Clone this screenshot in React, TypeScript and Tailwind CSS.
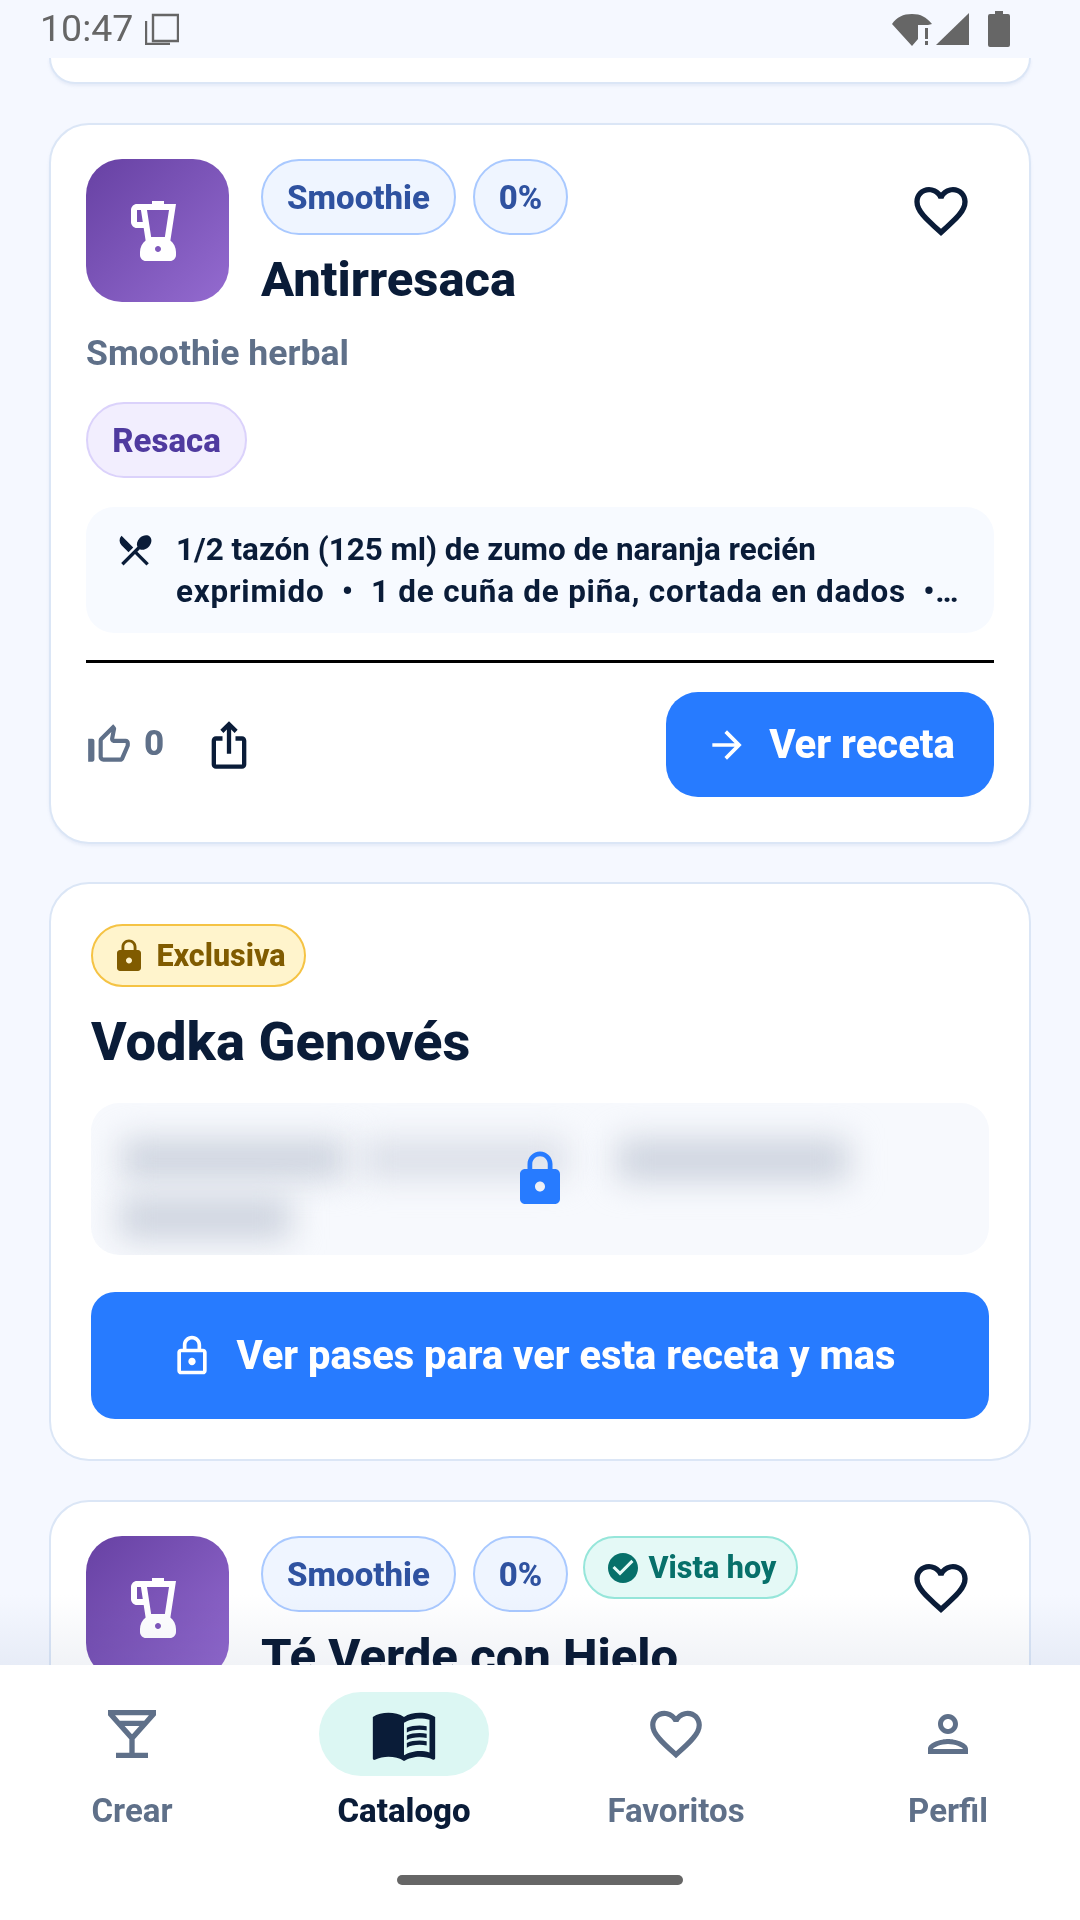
import React from "react";
import {
  MdBlender,
  MdFavoriteBorder,
  MdThumbUpOffAlt,
  MdIosShare,
  MdArrowForward,
  MdRestaurantMenu,
  MdLock,
  MdOutlineLock,
  MdCheckCircle,
  MdOutlineLocalBar,
  MdMenuBook,
  MdOutlinePerson,
} from "react-icons/md";

function Chip({ children, className = "" }: { children: React.ReactNode; className?: string }) {
  return (
    <span
      className={
        "inline-flex h-[76px] items-center justify-center rounded-[38px] border-2 border-[#a9c9ff] bg-[#eff5ff] pt-[2px] text-[33px] font-extrabold text-[#2f52a0] " +
        className
      }
    >
      {children}
    </span>
  );
}

function BlenderTile() {
  return (
    <div className="flex h-[143px] w-[143px] shrink-0 items-center justify-center rounded-[36px] bg-gradient-to-br from-[#6741a3] to-[#946bd0]">
      <MdBlender className="h-[72px] w-[72px] text-white" />
    </div>
  );
}

function Heart() {
  return <MdFavoriteBorder className="h-[64px] w-[64px] text-[#0a1c38]" />;
}

function NavItem({ label, active, children }: { label: string; active?: boolean; children: React.ReactNode }) {
  return (
    <div className="flex w-[272px] flex-col items-center">
      <div className={"flex h-[84px] w-[170px] items-center justify-center rounded-[42px] " + (active ? "bg-[#dcf7f3]" : "")}>
        {children}
      </div>
      <span className={"mt-[12px] text-[33px] leading-[46px] " + (active ? "text-[#0a1c38] font-extrabold" : "text-[#5f7089] font-bold")}>
        {label}
      </span>
    </div>
  );
}

export default function App() {
  return (
    <div className="flex h-[1920px] w-[1080px] flex-col overflow-hidden bg-[#f5f8ff] font-['Roboto',sans-serif]">
      <div className="flex h-[58px] shrink-0 items-center justify-between pl-[40px] pr-[70px]">
        <div className="flex items-center gap-[12px]">
          <span className="text-[37.5px] leading-none text-[#666666]">10:47</span>
          <svg width="34" height="32" viewBox="0 0 34 32" className="text-[#666666]">
            <path d="M8 2h25v26H8zM1 8v23h24" fill="none" stroke="currentColor" strokeWidth="2.4" />
          </svg>
        </div>
        <div className="flex items-center gap-[3px]">
          <svg width="40" height="34" viewBox="0 0 40 34" fill="#666666">
            <path d="M0 12C5 5 11 2 20 2s14 3 20 10l-4 1h-10v14l-6 7z" />
            <path d="M33 16h3v11h-3zM33 29h3v4h-3z" />
          </svg>
          <svg width="36" height="34" viewBox="0 0 36 34" fill="#666666">
            <path d="M34 1v32H1z" />
          </svg>
          <svg width="22" height="36" viewBox="0 0 22 36" fill="#666666" className="ml-[14px]">
            <path d="M7 0h8v3h5a2 2 0 0 1 2 2v29a2 2 0 0 1-2 2H2a2 2 0 0 1-2-2V5a2 2 0 0 1 2-2h5z" />
          </svg>
        </div>
      </div>

      <div className="relative min-h-0 flex-1 overflow-hidden px-[49px]">
        <div className="h-[26px] rounded-b-[38px] border-2 border-t-0 border-[#dbe6f6] bg-white shadow-[0_2px_3px_rgba(120,150,200,0.12)]" />

        <div className="mt-[39px] h-[721px] rounded-[40px] border-2 border-[#dbe6f6] bg-white px-[35px] pt-[34px] shadow-[0_2px_3px_rgba(120,150,200,0.12)]">
          <div className="flex">
            <BlenderTile />
            <div className="ml-[32px] flex-1">
              <div className="flex gap-[17px]">
                <Chip className="w-[195px]">Smoothie</Chip>
                <Chip className="w-[95px]">0%</Chip>
              </div>
              <div className="mt-[16px] text-[49px] leading-[58px] font-extrabold text-[#0a1c38]">Antirresaca</div>
            </div>
            <div className="mt-[20px] mr-[21px]">
              <Heart />
            </div>
          </div>
          <div className="mt-[22px] text-[35.6px] leading-[44px] font-bold text-[#5f7089]">Smoothie herbal</div>
          <div className="mt-[27px] flex">
            <span className="inline-flex h-[76px] w-[161px] items-center justify-center rounded-[38px] border-2 border-[#dbd2fb] bg-[#f2eefe] pt-[2px] text-[33px] font-extrabold text-[#4f3a9f]">
              Resaca
            </span>
          </div>
          <div className="mt-[29px] flex h-[126px] rounded-[28px] bg-[#f7faff] pt-[22px] pr-[28px] pl-[29px]">
            <MdRestaurantMenu className="mt-[1px] h-[40px] w-[40px] shrink-0 text-[#0a1c38]" />
            <div className="ml-[21px] text-[31.4px] leading-[42px] font-bold text-[#0a1c38]">
              <div>1/2 tazón (125 ml) de zumo de naranja recién</div>
              <div className="whitespace-pre tracking-[0.8px]">exprimido  •  1 de cuña de piña, cortada en dados  •…</div>
            </div>
          </div>
          <div className="mt-[27px] h-[3px] bg-black" />
          <div className="mt-[29px] flex items-center">
            <MdThumbUpOffAlt className="-ml-[2px] h-[50px] w-[50px] text-[#5f7089]" />
            <span className="ml-[10px] text-[35px] font-extrabold text-[#5f7089]">0</span>
            <MdIosShare className="ml-[39px] h-[52px] w-[52px] text-[#0a1c38]" />
            <div className="ml-auto flex h-[105px] w-[328px] items-center justify-center rounded-[32px] bg-[#277bff] text-white">
              <MdArrowForward className="h-[44px] w-[44px]" />
              <span className="ml-[20px] text-[40px] font-extrabold">Ver receta</span>
            </div>
          </div>
        </div>

        <div className="mt-[38px] h-[579px] rounded-[40px] border-2 border-[#dbe6f6] bg-white px-[40px] pt-[40px]">
          <div className="flex">
            <span className="inline-flex h-[63px] w-[215px] items-center justify-center rounded-[32px] border-2 border-[#f5c344] bg-[#fff4cc] text-[30.5px] font-extrabold text-[#805b00]">
              <MdLock className="h-[36px] w-[36px]" />
              <span className="ml-[9px]">Exclusiva</span>
            </span>
          </div>
          <div className="mt-[22px] text-[54.3px] leading-[66px] font-extrabold text-[#0a1c38]">Vodka Genovés</div>
          <div className="relative mt-[28px] h-[152px] overflow-hidden rounded-[28px] bg-[#f7f9fd]">
            <div className="flex pt-[36px] pl-[30px]">
              <div className="h-[40px] w-[226px] bg-[#cdd3de] blur-[16px]" />
              <div className="ml-[14px] h-[40px] w-[206px] bg-[#dbdfe8] blur-[16px]" />
              <div className="ml-[50px] h-[42px] w-[232px] bg-[#cdd3de] blur-[16px]" />
            </div>
            <div className="mt-[16px] ml-[28px] h-[42px] w-[172px] bg-[#cdd3de] blur-[16px]" />
            <MdLock className="absolute inset-0 m-auto h-[60px] w-[60px] text-[#277bff]" />
          </div>
          <div className="mt-[37px] flex h-[127px] items-center justify-center rounded-[24px] bg-[#277bff] pr-[14px] text-white">
            <MdOutlineLock className="h-[44px] w-[44px]" />
            <span className="ml-[22px] text-[39.8px] font-extrabold">Ver pases para ver esta receta y mas</span>
          </div>
        </div>

        <div className="mt-[39px] h-[300px] rounded-[40px] border-2 border-[#dbe6f6] bg-white px-[35px] pt-[34px]">
          <div className="flex">
            <BlenderTile />
            <div className="ml-[32px] flex-1">
              <div className="flex items-start gap-[17px]">
                <Chip className="w-[195px]">Smoothie</Chip>
                <Chip className="-mr-[2px] w-[95px]">0%</Chip>
                <span className="inline-flex h-[63px] w-[215px] items-center justify-center rounded-[32px] border-2 border-[#96e6da] bg-[#e4f9f6] text-[30.5px] font-extrabold text-[#07706a]">
                  <MdCheckCircle className="h-[36px] w-[36px]" />
                  <span className="ml-[8px]">Vista hoy</span>
                </span>
              </div>
              <div className="mt-[16px] text-[49px] leading-[58px] font-extrabold text-[#0a1c38]">Té Verde con Hielo</div>
            </div>
            <div className="mt-[20px] mr-[21px]">
              <Heart />
            </div>
          </div>
        </div>

        <div className="absolute right-0 bottom-0 left-0 h-[70px] bg-gradient-to-b from-white to-[#f1f3f7] mix-blend-multiply" />
      </div>

      <div className="h-[255px] shrink-0 bg-white">
        <div className="mx-[-4px] flex pt-[27px]">
          <NavItem label="Crear">
            <MdOutlineLocalBar className="h-[64px] w-[64px] text-[#5f7089]" />
          </NavItem>
          <NavItem label="Catalogo" active>
            <MdMenuBook className="h-[68px] w-[68px] text-[#0a1c38]" />
          </NavItem>
          <NavItem label="Favoritos">
            <MdFavoriteBorder className="h-[62px] w-[62px] text-[#5f7089]" />
          </NavItem>
          <NavItem label="Perfil">
            <MdOutlinePerson className="h-[60px] w-[60px] text-[#5f7089]" />
          </NavItem>
        </div>
        <div className="mx-auto mt-[41px] h-[10px] w-[286px] rounded-full bg-[#666666]" />
      </div>
    </div>
  );
}
